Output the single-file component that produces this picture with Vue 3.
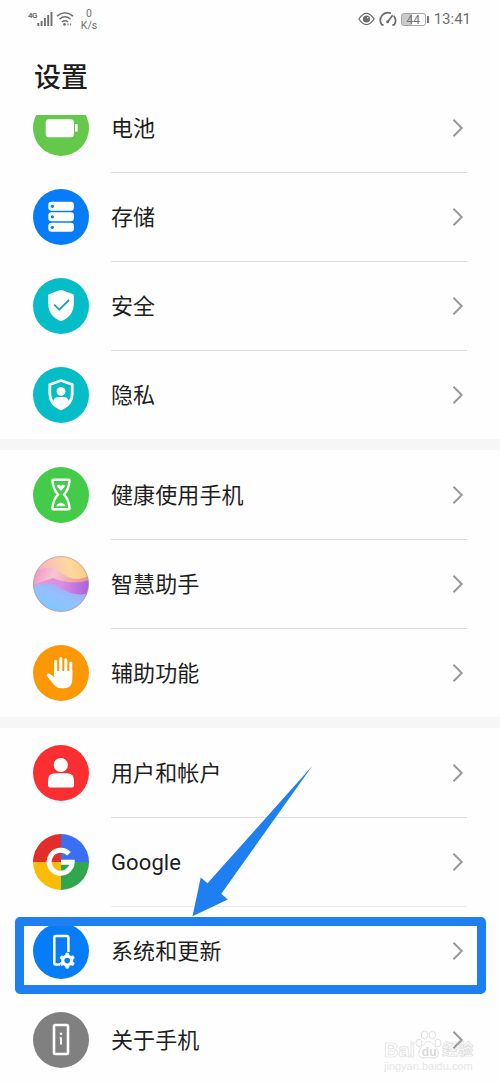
<script setup>
const groups = [
  [
    { icon: "battery", label: "电池" },
    { icon: "storage", label: "存储" },
    { icon: "security", label: "安全" },
    { icon: "privacy", label: "隐私" },
  ],
  [
    { icon: "health", label: "健康使用手机" },
    { icon: "assistant", label: "智慧助手" },
    { icon: "access", label: "辅助功能" },
  ],
  [
    { icon: "user", label: "用户和帐户" },
    { icon: "google", label: "Google", faint: true },
    { icon: "system", label: "系统和更新", plain: true },
    { icon: "about", label: "关于手机" },
  ],
];
</script>

<template>
  <main class="settings">
    <header class="status">
      <span class="status__net">4G</span>
      <svg class="status__signal" width="16" height="16" viewBox="0 0 16 16">
        <path d="M1.3 12v3M4.6 10v5M7.9 7v8M11.2 4v11M14.5 1v14" stroke="#707070" stroke-width="1.9" />
      </svg>
      <svg class="status__wifi" width="18" height="16" viewBox="0 0 18 16" fill="none" stroke="#707070" stroke-width="1.5">
        <path d="M1 5.1Q9-1.7 17 5.1M3.5 8.1Q9 3.6 14.5 8.1M6 11Q9 8.5 12 11" />
        <circle cx="8.5" cy="13.4" r="1.3" fill="#707070" stroke="none" />
        <path d="M12 12.4v2M14.6 12.4v2" stroke-width="1" />
      </svg>
      <span class="status__speed"><span>0</span><span>K/s</span></span>
      <span class="status__space"></span>
      <svg class="status__eye" width="17" height="14" viewBox="0 0 17 14" fill="none" stroke="#6c6c6c" stroke-width="1.3">
        <path d="M.9 7Q8.5-4.2 16.1 7Q8.5 18.2.9 7z" />
        <circle cx="8.5" cy="7" r="3.6" fill="#6c6c6c" stroke="none" />
        <circle cx="9.7" cy="5.8" r=".8" fill="#fff" stroke="none" />
      </svg>
      <svg class="status__gauge" width="18" height="16" viewBox="0 0 18 16" fill="none" stroke="#6c6c6c" stroke-width="1.7">
        <path d="M4.6 13.8H2.9A7.6 7.6 0 0 1 12 2.3M14.7 4.8A7.6 7.6 0 0 1 15.2 13.8H13.3M8.4 11.2L13.6 4.2" />
        <circle cx="8.6" cy="10.7" r="1.5" fill="#6c6c6c" stroke="none" />
      </svg>
      <span class="status__battery">44</span>
      <span class="status__time">13:41</span>
    </header>
    <h1 class="title">设置</h1>

    <div class="list">
      <section v-for="(group, g) in groups" :key="g" class="group">
        <div v-for="item in group" :key="item.icon" class="row">
          <svg class="row__icon" width="56" height="56" viewBox="0 0 56 56">
            <g v-if="item.icon === 'battery'" fill="#fff">
              <circle cx="28" cy="28" r="28" fill="#64c84b" />
              <rect x="12.7" y="19.2" width="28.2" height="18" rx="3.2" />
              <rect x="42" y="24" width="2.7" height="7.8" rx="1" />
            </g>
            <g v-else-if="item.icon === 'storage'">
              <circle cx="28" cy="28" r="28" fill="#067cf9" />
              <template v-for="y in [12.8, 23.3, 33.8]" :key="y">
                <rect x="15.3" :y="y" width="25.6" height="9" rx="3.2" fill="#fff" />
                <circle cx="19.4" :cy="y + 4.5" r="1.6" fill="#067cf9" />
              </template>
            </g>
            <g v-else-if="item.icon === 'security'">
              <circle cx="28" cy="28" r="28" fill="#04bdc6" />
              <path d="M28 11.8L40.2 16.3Q40.8 16.6 40.8 17.3V26C40.8 34.5 35.6 40.2 28 43.3C20.4 40.2 15.2 34.5 15.2 26V17.3Q15.2 16.6 15.8 16.3z" fill="#fff" />
              <path d="M21.2 26.6L26.3 31.6L36 22" fill="none" stroke="#27a4ad" stroke-width="1.9" />
            </g>
            <g v-else-if="item.icon === 'privacy'">
              <circle cx="28" cy="28" r="28" fill="#04bdc6" />
              <path d="M28 13.5L39.2 17.5V27C39.2 34 34.8 39 28 41.9C21.2 39 16.8 34 16.8 27V17.5z" fill="none" stroke="#fff" stroke-width="2.8" stroke-linejoin="round" />
              <circle cx="28" cy="24.3" r="4.4" fill="#fff" />
              <path d="M20 35.7Q20.2 29.9 25.5 29.9H30.5Q35.8 29.9 36 35.7Q33.4 39.4 28 41.8Q22.6 39.4 20 35.7z" fill="#fff" />
            </g>
            <g v-else-if="item.icon === 'health'">
              <circle cx="28" cy="28" r="28" fill="#43cb49" />
              <path d="M20.3 12.7H35.7Q36.7 12.7 36.5 14.2C35.9 21.8 33.8 24.5 31 27.5C33.8 30.5 35.9 33.2 36.5 40.8Q36.7 42.3 35.7 42.3H20.3Q19.3 42.3 19.5 40.8C20.1 33.2 22.2 30.5 25 27.5C22.2 24.5 20.1 21.8 19.5 14.2Q19.3 12.7 20.3 12.7z" fill="none" stroke="#fff" stroke-width="2.4" />
              <path d="M28 24L24.2 19.8C23.3 17.7 26.8 17 28 19C29.2 17 32.7 17.7 31.8 19.8zM23 39.2Q24 37 28 35.6Q32 37 33 39.2z" fill="#fff" />
            </g>
            <g v-else-if="item.icon === 'assistant'">
              <defs>
                <linearGradient id="sky" x1="0" y1=".4" x2="1" y2="0">
                  <stop offset="0" stop-color="#f3a9c0" />
                  <stop offset=".4" stop-color="#fbc8b0" />
                  <stop offset=".65" stop-color="#fdd99c" />
                  <stop offset="1" stop-color="#f9bd78" />
                </linearGradient>
                <linearGradient id="pink" x1="0" y1="0" x2="1" y2=".2">
                  <stop offset="0" stop-color="#ec90c0" />
                  <stop offset=".4" stop-color="#f9c6d2" />
                  <stop offset="1" stop-color="#f0908c" />
                </linearGradient>
                <linearGradient id="violet" x1="0" y1="0" x2="1" y2="0">
                  <stop offset="0" stop-color="#e49ad8" />
                  <stop offset=".5" stop-color="#d98fe2" />
                  <stop offset="1" stop-color="#a95fdc" />
                </linearGradient>
                <linearGradient id="sea" x1=".2" y1="1" x2="1" y2="0">
                  <stop offset="0" stop-color="#79cafd" />
                  <stop offset=".5" stop-color="#94c0fe" />
                  <stop offset="1" stop-color="#b392f2" />
                </linearGradient>
                <clipPath id="ball"><circle cx="28" cy="28" r="27.6" /></clipPath>
              </defs>
              <g clip-path="url(#ball)">
                <path d="M0 0H56V56H0z" fill="url(#sky)" />
                <path d="M0 17Q12 9 22 13C31 17 36 28 56 20V40H0z" fill="url(#pink)" />
                <path d="M0 29Q10 25 20 22Q40 30 56 24V48H0z" fill="url(#violet)" />
                <path d="M0 31Q13 25 24 30C34 36 44 41 56 37V56H0z" fill="url(#sea)" />
              </g>
              <circle cx="28" cy="28" r="27.5" fill="none" stroke="#ad95a8" stroke-width=".7" />
            </g>
            <g v-else-if="item.icon === 'access'">
              <circle cx="28" cy="28" r="28" fill="#fc9803" />
              <path d="M22.7 30V16.3M27.8 28V13.5M32.8 28V14.8M37.8 30V18" fill="none" stroke="#fff" stroke-width="3" stroke-linecap="round" />
              <path d="M21.2 26H39.3V34.5Q39.3 43.3 30.8 43.3H28.7Q24 43.3 21 39.7L14 31.2Q13 29.6 14.4 28.8Q15.5 28.2 17 29.1L21.2 32z" fill="#fff" />
            </g>
            <g v-else-if="item.icon === 'user'" fill="#fff">
              <circle cx="28" cy="28" r="28" fill="#fb2e31" />
              <circle cx="27.8" cy="20" r="7.1" />
              <path d="M15 40.5V35.5Q15 28.3 22.2 28.3H33.8Q41 28.3 41 35.5V40.5Q41 42.5 39 42.5H17Q15 42.5 15 40.5z" />
            </g>
            <g v-else-if="item.icon === 'google'">
              <path d="M28 28V0A28 28 0 0 0 0 28z" fill="#e32d29" />
              <path d="M28 28H56A28 28 0 0 0 28 0z" fill="#3b6ff3" />
              <path d="M28 28V56A28 28 0 0 0 56 28z" fill="#30a64e" />
              <path d="M28 28H0A28 28 0 0 0 28 56z" fill="#fbbc09" />
              <path d="M36 19.8A11.5 11.5 0 1 0 39.2 28.2H28" fill="none" stroke="#fff" stroke-width="5" />
            </g>
            <g v-else-if="item.icon === 'system'">
              <circle cx="28" cy="28" r="28" fill="#067cf9" />
              <path d="M35.4 29V14.6Q35.4 13.1 33.9 13.1H22.8Q21.3 13.1 21.3 14.6V40Q21.3 41.5 22.8 41.5H27" fill="none" stroke="#fff" stroke-width="2.5" />
              <path d="M32.2 32.4L33 30h2.4l.8 2.4 1.6.9 2.4-.5 1.2 2.1-1.6 1.8v1.8l1.6 1.8-1.2 2.1-2.4-.5-1.6.9-.8 2.4H33l-.8-2.4-1.6-.9-2.4.5-1.2-2.1 1.6-1.8v-1.8L27 34.9l1.2-2.1 2.4.5z" fill="#fff" stroke="#fff" stroke-width=".6" stroke-linejoin="round" />
              <circle cx="34.2" cy="37.6" r="2.8" fill="#067cf9" />
            </g>
            <g v-else fill="#fff">
              <circle cx="28" cy="28" r="28" fill="#808080" />
              <rect x="21" y="13" width="14" height="29" rx="1.2" fill="none" stroke="#fff" stroke-width="2.6" />
              <circle cx="28" cy="21.8" r="1.3" />
              <path d="M26.5 25.2H28.9V32.5H27.1V26.5H26.5z" />
            </g>
          </svg>
          <div class="row__body" :class="{ 'row__body--plain': item.plain, 'row__body--faint': item.faint }">
            <span class="row__label">{{ item.label }}</span>
            <svg class="row__arrow" width="12" height="20" viewBox="0 0 12 20">
              <path d="M1.5 1.8L9.7 10L1.5 18.2" fill="none" stroke="#999" stroke-width="2" />
            </svg>
          </div>
        </div>
      </section>
    </div>

    <div class="highlight"></div>
    <svg class="pointer" width="500" height="1084" viewBox="0 0 500 1084">
      <path d="M192.5 916.2L200.7 877.6L207.5 883.3L312.4 765.8L221.3 893.8L227.8 899.6z" fill="#1e80f0" />
    </svg>
    <div class="watermark">
      <div class="watermark__brand">
        <span>Bai</span>
        <svg width="27" height="29" viewBox="0 0 27 29">
          <g fill="#fff" stroke="#e0e0e0" stroke-width="1">
            <ellipse cx="4" cy="13" rx="3" ry="3.8" />
            <ellipse cx="9.6" cy="5" rx="3.2" ry="4" />
            <ellipse cx="17.4" cy="5" rx="3.2" ry="4" />
            <ellipse cx="23" cy="13" rx="3" ry="3.8" />
            <path d="M13.5 11.5C17 11.5 18 15 21.2 18C25 21.7 23.5 28 19 28C16 28 15.5 27.5 13.5 27.5S11 28 8 28C3.5 28 2 21.7 5.8 18C9 15 10 11.5 13.5 11.5z" />
          </g>
          <text x="6.8" y="25.5" font-size="12" fill="#dadada">du</text>
        </svg>
        <span class="watermark__cn">经验</span>
      </div>
      <div class="watermark__url">jingyan.baidu.com</div>
    </div>
  </main>
</template>

<style>
body {
  margin: 0;
  background: #fefefe;
}
</style>

<style scoped>
.settings {
  position: relative;
  display: flex;
  flex-direction: column;
  width: 500px;
  height: 1084px;
  overflow: hidden;
  background: #fefefe;
  color: #1e1e1e;
  font-family: Roboto, "Noto Sans CJK SC", sans-serif;
}

.status {
  display: flex;
  align-items: center;
  box-sizing: border-box;
  height: 38px;
  padding: 0 29px 0 28px;
  color: #707070;
}

.status__net {
  width: 9px;
  margin-bottom: 8px;
  font-size: 8px;
  font-weight: 700;
  letter-spacing: -0.6px;
}

.status__wifi {
  margin-left: 3px;
}

.status__speed {
  display: flex;
  flex-direction: column;
  align-items: center;
  width: 18px;
  margin: 1px 0 0 6px;
  font-size: 10.5px;
  line-height: 12px;
}

.status__space {
  flex: 1;
}

.status__gauge {
  margin-left: 4px;
}

.status__battery {
  position: relative;
  box-sizing: border-box;
  width: 25px;
  height: 13px;
  margin: 0 8px 0 4px;
  border: 1px solid #a5a5a5;
  border-radius: 3px;
  background: linear-gradient(90deg, #cbcbcb 44%, #fff 44%);
  font-size: 12px;
  line-height: 12px;
  text-align: center;
}

.status__battery::after {
  content: "";
  position: absolute;
  top: 2px;
  right: -4px;
  width: 2px;
  height: 7px;
  background: #777;
}

.status__time {
  font-size: 15px;
}

.title {
  box-sizing: border-box;
  height: 77px;
  margin: 0;
  padding: 3px 0 0 34px;
  font-size: 27px;
  font-weight: 500;
  line-height: 74px;
}

.list {
  flex: 1;
  overflow: hidden;
}

.group {
  padding-top: 1px;
  border-bottom: 11px solid #f6f6f6;
}

.group:first-child {
  margin-top: -32px;
}

.group:last-child {
  border-bottom: 0;
}

.row {
  display: flex;
  align-items: stretch;
  gap: 22px;
  height: 89px;
  padding: 0 33px;
}

.row:last-child {
  height: 88px;
}

.row__icon {
  flex: none;
  margin-top: 16px;
}

.row__body {
  display: flex;
  flex: 1;
  align-items: center;
  justify-content: space-between;
  border-bottom: 1px solid #dcdcdc;
}

.row__body--faint {
  border-bottom-color: #ebebeb;
}

.row__body--plain {
  border-bottom-color: transparent;
}

.row:last-child .row__body {
  border-bottom: 0;
}

.row__label {
  padding-top: 2px;
  font-size: 22px;
  letter-spacing: 0.1px;
  line-height: 32px;
}

.row__arrow {
  position: relative;
  z-index: 1;
  margin-right: 3px;
}

.highlight {
  position: absolute;
  top: 917px;
  left: 15px;
  box-sizing: border-box;
  width: 471px;
  height: 77px;
  border: 9px solid #1e80f0;
  border-radius: 5px;
}

.pointer {
  position: absolute;
  top: 0;
  left: 0;
}

.watermark {
  position: absolute;
  top: 1030px;
  left: 384px;
  width: 92px;
  color: #fff;
  font-family: "Liberation Sans", "Noto Sans CJK SC", sans-serif;
}

.watermark__brand {
  display: flex;
  align-items: flex-end;
  height: 29px;
  font-size: 20px;
  font-weight: 700;
  line-height: 18px;
  -webkit-text-stroke: 0.7px #ddd;
}

.watermark__brand svg {
  flex: none;
  -webkit-text-stroke: 0;
}

.watermark__cn {
  font-size: 15.5px;
  white-space: nowrap;
}

.watermark__url {
  margin-top: 1px;
  color: #e6e6e6;
  font-size: 11px;
  line-height: 12px;
}
</style>
